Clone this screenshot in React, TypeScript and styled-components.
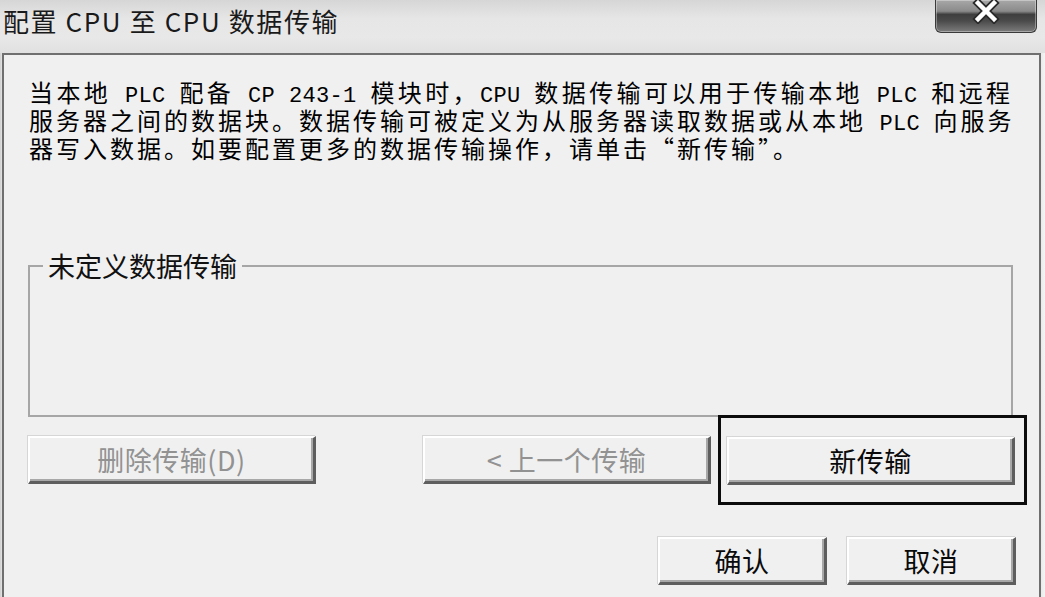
import React from "react";
import styled, { createGlobalStyle } from "styled-components";

const GlobalStyle = createGlobalStyle`
  html, body {
    margin: 0;
    padding: 0;
    background: #e2e2e2;
  }
  body {
    width: 1045px;
    height: 597px;
    overflow: hidden;
  }
`;

const Window = styled.div`
  width: 1045px;
  height: 597px;
  display: flex;
  flex-direction: column;
  overflow: hidden;
  background: linear-gradient(to right, #cfcfcf 0, #e4e4e4 2px, #e8e8e8 1040px, #f4f4f4 1045px);
  font-family: "Noto Sans CJK SC", sans-serif;
`;

const TitleBar = styled.div`
  height: 53px;
  flex: none;
  display: flex;
  align-items: flex-start;
  justify-content: space-between;
  padding: 0 8px 0 3px;
  background: linear-gradient(to bottom, #d6d6d6 0%, #e6e6e6 35%, #e8e8e8 70%, #e0e0e0 100%);
`;

const Title = styled.div`
  margin-top: 4px;
  font-size: 26px;
  line-height: 34px;
  letter-spacing: 1.6px;
  color: #1a1a1a;
`;

const CloseButton = styled.div`
  width: 102px;
  height: 33px;
  box-sizing: border-box;
  display: flex;
  align-items: flex-start;
  justify-content: center;
  border: 1px solid #3a3a3a;
  border-top: none;
  border-radius: 0 0 6px 6px;
  background: linear-gradient(
    to bottom,
    #a8a8a8 0%,
    #8a8a8a 35%,
    #3e3e3e 45%,
    #4a4a4a 65%,
    #7c7c7c 100%
  );
  box-shadow: inset 0 0 0 1px rgba(255, 255, 255, 0.35);
`;

const Client = styled.div`
  flex: 1;
  margin: 0 4px 0 2px;
  border: 2px solid #6f6f6f;
  border-bottom: none;
  background: #f0f0f0;
  display: flex;
  flex-direction: column;
`;

const Description = styled.div`
  margin: 25px 26px 0 25px;
  font-size: 24px;
  line-height: 23px;
  letter-spacing: 3px;
  color: #000;
`;

const Line = styled.div<{ $justify?: boolean }>`
  white-space: nowrap;
  text-align: ${(p) => (p.$justify ? "justify" : "left")};
  text-align-last: ${(p) => (p.$justify ? "justify" : "left")};
`;

const Ascii = styled.span`
  font-family: "Liberation Mono", monospace;
  font-size: 22px;
  letter-spacing: 0.3px;
`;

const Group = styled.fieldset`
  margin: 93px 26px 0 24px;
  padding: 0;
  border: 2px solid #a6a6a6;
  min-inline-size: 0;
`;

const GroupLabel = styled.legend`
  margin-left: 13px;
  padding: 0 5px;
  font-size: 27px;
  line-height: 28px;
  color: #111;
`;

const GroupBody = styled.div`
  height: 135px;
`;

const ButtonRow = styled.div<{ $end?: boolean }>`
  display: flex;
  align-items: center;
  justify-content: ${(p) => (p.$end ? "flex-end" : "flex-start")};
  gap: ${(p) => (p.$end ? "20px" : "0")};
  padding: ${(p) => (p.$end ? "0 23px 0 0" : "0 0 0 24px")};
  margin-top: ${(p) => (p.$end ? "32px" : "-2px")};
`;

const Button = styled.div<{ $disabled?: boolean; $width?: number; $gap?: number }>`
  width: ${(p) => p.$width ?? 288}px;
  height: 48px;
  box-sizing: border-box;
  margin-left: ${(p) => p.$gap ?? 0}px;
  display: flex;
  align-items: center;
  justify-content: center;
  background: #f0f0f0;
  border-style: solid;
  border-width: 2px 3px 3px 2px;
  border-color: #ffffff #5e5e5e #5e5e5e #ffffff;
  box-shadow: inset -2px -2px 0 #a8a8a8, -1px -1px 0 #d6d6d6;
  font-size: 27px;
  line-height: 30px;
  letter-spacing: 0.5px;
  color: ${(p) => (p.$disabled ? "#929292" : "#0a0a0a")};
  flex: none;
`;

const FocusFrame = styled.div`
  margin-left: 7px;
  padding: 19px 9px 17px 6px;
  border: 3px solid #0c0c0c;
  flex: none;
`;

const CloseGlyph = () => (
  <svg width="28" height="24" viewBox="0 0 28 24">
    <path d="M6 3 L22 19 M22 3 L6 19" stroke="#2a2a2a" strokeWidth="8" strokeLinecap="square" />
    <path d="M6 3 L22 19 M22 3 L6 19" stroke="#ffffff" strokeWidth="4.5" strokeLinecap="square" />
  </svg>
);

export default function App() {
  return (
    <>
      <GlobalStyle />
      <Window lang="zh-CN">
        <TitleBar>
          <Title>配置 CPU 至 CPU 数据传输</Title>
          <CloseButton>
            <CloseGlyph />
          </CloseButton>
        </TitleBar>
        <Client>
          <Description>
            <Line $justify>
              当本地<Ascii> PLC </Ascii>配备<Ascii> CP 243-1  </Ascii>模块时，<Ascii>CPU </Ascii>
              数据传输可以用于传输本地<Ascii> PLC </Ascii>和远程
            </Line>
            <Line $justify>
              服务器之间的数据块。数据传输可被定义为从服务器读取数据或从本地<Ascii> PLC </Ascii>向服务
            </Line>
            <Line>器写入数据。如要配置更多的数据传输操作，请单击“新传输”。</Line>
          </Description>
          <Group>
            <GroupLabel>未定义数据传输</GroupLabel>
            <GroupBody />
          </Group>
          <ButtonRow>
            <Button $disabled>删除传输(D)</Button>
            <Button $disabled $gap={107}>
              &lt; 上一个传输
            </Button>
            <FocusFrame>
              <Button>新传输</Button>
            </FocusFrame>
          </ButtonRow>
          <ButtonRow $end>
            <Button $width={169}>确认</Button>
            <Button $width={169}>取消</Button>
          </ButtonRow>
        </Client>
      </Window>
    </>
  );
}
